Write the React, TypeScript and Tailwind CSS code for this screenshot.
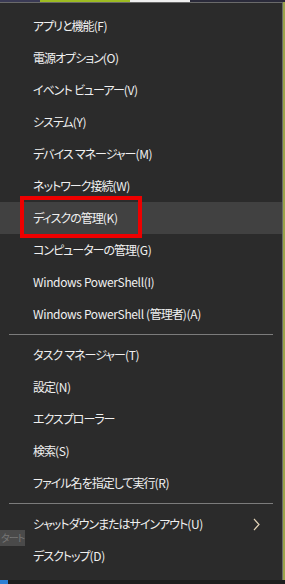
const groups: string[][] = [
  [
    'アプリと機能(F)',
    '電源オプション(O)',
    'イベント ビューアー(V)',
    'システム(Y)',
    'デバイス マネージャー(M)',
    'ネットワーク接続(W)',
    'ディスクの管理(K)',
    'コンピューターの管理(G)',
    'Windows PowerShell(I)',
    'Windows PowerShell (管理者)(A)',
  ],
  ['タスク マネージャー(T)', '設定(N)', 'エクスプローラー', '検索(S)', 'ファイル名を指定して実行(R)'],
  ['シャットダウンまたはサインアウト(U)', 'デスクトップ(D)'],
];

// kana/kanji runs are tighter than latin ones in the original UI font
function Label({ text }: { text: string }) {
  const runs = text.match(/[\u3000-\u9fff\uff00-\uffef]+|[^\u3000-\u9fff\uff00-\uffef]+/g) ?? [];
  return (
    <span className="whitespace-nowrap text-[12px] text-[#f0f0f0]">
      {runs.map((r, i) =>
        /[\u3000-\u9fff]/.test(r) ? (
          <span key={i} className="tracking-[-1px]">
            {r}
          </span>
        ) : (
          <span key={i} className="tracking-[-0.35px]">
            {r}
          </span>
        ),
      )}
    </span>
  );
}

function Item({ label }: { label: string }) {
  const active = label === 'ディスクの管理(K)';
  const submenu = label.startsWith('シャットダウン');
  return (
    <div
      className={`relative flex h-8 items-center pl-[33px] pr-3 ${active ? 'bg-[#414141]' : ''}`}
    >
      {active && (
        <div className="absolute left-[20px] top-[-6px] h-[42px] w-[122px] border-4 border-[#ee0000]" />
      )}
      <Label text={label} />
      {submenu && (
        <svg className="ml-auto mr-[10px]" width="7" height="13" viewBox="0 0 7 13">
          <path d="M1 1l5 5.5L1 12" fill="none" stroke="#e2d2b6" strokeWidth="1.2" />
        </svg>
      )}
    </div>
  );
}

export default function App() {
  return (
    <div
      className="relative h-[584px] w-[285px] overflow-hidden bg-[#8e9a2a]"
      style={{ fontFamily: '"Noto Sans CJK JP", "Noto Sans", sans-serif', fontFeatureSettings: '"palt"' }}
    >
      <div className="flex h-[2px]">
        <div className="w-[40px] bg-[#3a3a55]" />
        <div className="w-[90px] bg-[#9dbb22]" />
        <div className="w-[60px] bg-[#f0f0f0]" />
        <div className="flex-1 bg-[#2a2a3a]" />
      </div>
      <div className="flex h-[578px]">
        <div className="w-[283px] border-t border-r border-[#6a6a6a] bg-[#2b2b2b] pt-[7px]">
          {groups.map((g, gi) => (
            <div key={gi}>
              {gi > 0 && <div className="mx-[9px] my-1 h-px bg-[#7c7c7c]" />}
              {g.map((l) => (
                <Item key={l} label={l} />
              ))}
            </div>
          ))}
        </div>
        <div className="flex-1 bg-[#9aa44a]" />
      </div>
      <div className="flex h-[4px] bg-[#1e1e1e]">
        <div className="w-[8px] bg-[#2d7fd4]" />
      </div>
      <div className="absolute left-0 top-[530px] flex h-[16px] items-center whitespace-nowrap bg-[#4a4a4a] px-[1px] text-[10px] leading-none tracking-[-1px] text-[#777]">
        タート
      </div>
    </div>
  );
}
